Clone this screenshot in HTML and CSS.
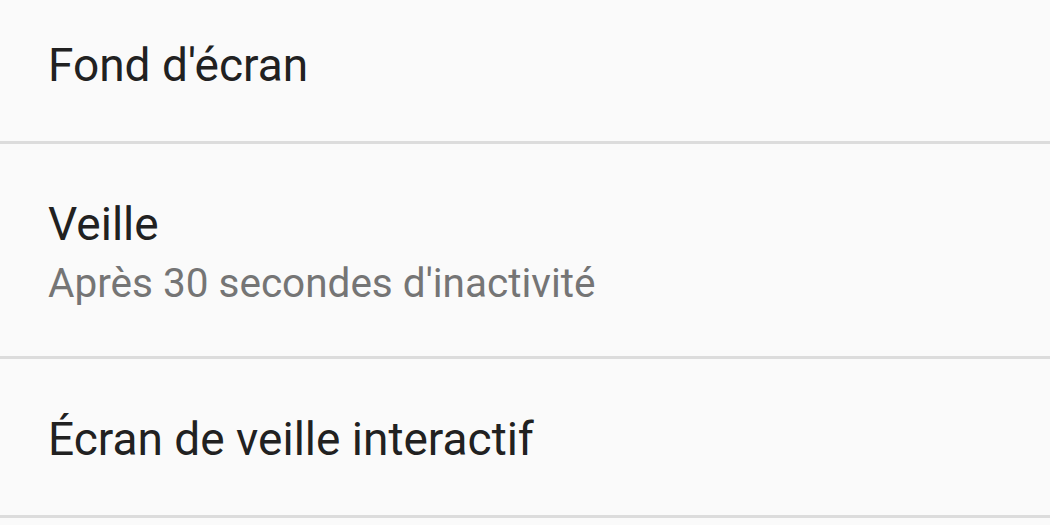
FILE: index.html
```html
<!DOCTYPE html>
<html lang="fr">
<head>
<meta charset="utf-8">
<title>Affichage</title>
<link rel="stylesheet" href="styles.css">
</head>
<body>
<ul class="list">
  <li class="item item-first">
    <div class="title">Fond d'écran</div>
  </li>
  <li class="item item-two">
    <div class="title">Veille</div>
    <div class="summary">Après 30 secondes d'inactivité</div>
  </li>
  <li class="item">
    <div class="title">Écran de veille interactif</div>
  </li>
</ul>
</body>
</html>
```

FILE: styles.css
```css
html, body {
  margin: 0;
  padding: 0;
  background: #fafafa;
  width: 1050px;
  height: 525px;
  overflow: hidden;
}
.list {
  list-style: none;
  margin: 0;
  padding: 0;
  font-family: Roboto, "Noto Sans", sans-serif;
}
.item {
  display: flex;
  flex-direction: column;
  padding: 53px 48px 49px 48px;
  border-bottom: 3px solid #dcdcdc;
}
.item-first {
  padding-top: 38px;
  padding-bottom: 49px;
}
.item-two {
  padding-top: 53px;
  padding-bottom: 49px;
}
.title {
  font-size: 46px;
  line-height: 54px;
  color: #212121;
}
.item-two .title {
  margin-bottom: 8px;
}
.summary {
  font-size: 40.5px;
  line-height: 48px;
  color: #757575;
}
```
